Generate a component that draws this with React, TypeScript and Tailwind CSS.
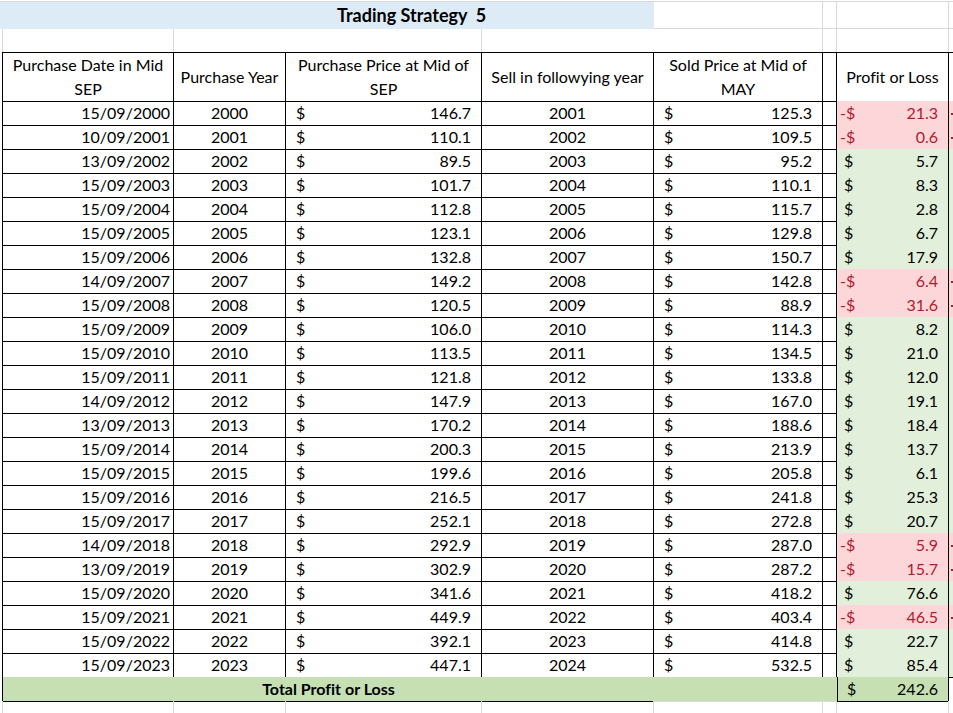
import React from 'react';

type Trade = {
  date: string;
  buyYear: number;
  buyPrice: string;
  sellYear: number;
  sellPrice: string;
  pl: number;
};

const trades: Trade[] = [
  { date: '15/09/2000', buyYear: 2000, buyPrice: '146.7', sellYear: 2001, sellPrice: '125.3', pl: -21.3 },
  { date: '10/09/2001', buyYear: 2001, buyPrice: '110.1', sellYear: 2002, sellPrice: '109.5', pl: -0.6 },
  { date: '13/09/2002', buyYear: 2002, buyPrice: '89.5', sellYear: 2003, sellPrice: '95.2', pl: 5.7 },
  { date: '15/09/2003', buyYear: 2003, buyPrice: '101.7', sellYear: 2004, sellPrice: '110.1', pl: 8.3 },
  { date: '15/09/2004', buyYear: 2004, buyPrice: '112.8', sellYear: 2005, sellPrice: '115.7', pl: 2.8 },
  { date: '15/09/2005', buyYear: 2005, buyPrice: '123.1', sellYear: 2006, sellPrice: '129.8', pl: 6.7 },
  { date: '15/09/2006', buyYear: 2006, buyPrice: '132.8', sellYear: 2007, sellPrice: '150.7', pl: 17.9 },
  { date: '14/09/2007', buyYear: 2007, buyPrice: '149.2', sellYear: 2008, sellPrice: '142.8', pl: -6.4 },
  { date: '15/09/2008', buyYear: 2008, buyPrice: '120.5', sellYear: 2009, sellPrice: '88.9', pl: -31.6 },
  { date: '15/09/2009', buyYear: 2009, buyPrice: '106.0', sellYear: 2010, sellPrice: '114.3', pl: 8.2 },
  { date: '15/09/2010', buyYear: 2010, buyPrice: '113.5', sellYear: 2011, sellPrice: '134.5', pl: 21.0 },
  { date: '15/09/2011', buyYear: 2011, buyPrice: '121.8', sellYear: 2012, sellPrice: '133.8', pl: 12.0 },
  { date: '14/09/2012', buyYear: 2012, buyPrice: '147.9', sellYear: 2013, sellPrice: '167.0', pl: 19.1 },
  { date: '13/09/2013', buyYear: 2013, buyPrice: '170.2', sellYear: 2014, sellPrice: '188.6', pl: 18.4 },
  { date: '15/09/2014', buyYear: 2014, buyPrice: '200.3', sellYear: 2015, sellPrice: '213.9', pl: 13.7 },
  { date: '15/09/2015', buyYear: 2015, buyPrice: '199.6', sellYear: 2016, sellPrice: '205.8', pl: 6.1 },
  { date: '15/09/2016', buyYear: 2016, buyPrice: '216.5', sellYear: 2017, sellPrice: '241.8', pl: 25.3 },
  { date: '15/09/2017', buyYear: 2017, buyPrice: '252.1', sellYear: 2018, sellPrice: '272.8', pl: 20.7 },
  { date: '14/09/2018', buyYear: 2018, buyPrice: '292.9', sellYear: 2019, sellPrice: '287.0', pl: -5.9 },
  { date: '13/09/2019', buyYear: 2019, buyPrice: '302.9', sellYear: 2020, sellPrice: '287.2', pl: -15.7 },
  { date: '15/09/2020', buyYear: 2020, buyPrice: '341.6', sellYear: 2021, sellPrice: '418.2', pl: 76.6 },
  { date: '15/09/2021', buyYear: 2021, buyPrice: '449.9', sellYear: 2022, sellPrice: '403.4', pl: -46.5 },
  { date: '15/09/2022', buyYear: 2022, buyPrice: '392.1', sellYear: 2023, sellPrice: '414.8', pl: 22.7 },
  { date: '15/09/2023', buyYear: 2023, buyPrice: '447.1', sellYear: 2024, sellPrice: '532.5', pl: 85.4 },
];

const GRID = 'grid grid-cols-[172px_112px_196px_172px_169px_14px_112px_1fr] ml-[2px]';

const Money: React.FC<{ value: string; className?: string }> = ({ value, className = '' }) => (
  <div className={`flex items-center justify-between pl-[10px] pr-[10px] ${className}`}>
    <span>$</span>
    <span>{value}</span>
  </div>
);

const TradeRow: React.FC<{ t: Trade }> = ({ t }) => {
  const loss = t.pl < 0;
  const fill = loss ? 'bg-[#fcd6d9] text-[#b01c2c]' : 'bg-[#e2efda]';
  return (
    <div className={`${GRID} h-6`}>
      <div className="border-l border-r border-b border-black flex items-center justify-end pr-[3px]">{t.date}</div>
      <div className="border-r border-b border-black flex items-center justify-center">{t.buyYear}</div>
      <Money value={t.buyPrice} className="border-r border-b border-black" />
      <div className="border-r border-b border-black flex items-center justify-center">{t.sellYear}</div>
      <Money value={t.sellPrice} className="border-r border-b border-black" />
      <div className="border-r border-b border-black" />
      <div className={`border-r border-b border-black flex items-center justify-between pl-[3px] pr-[10px] ${fill}`}>
        <span className="whitespace-pre">{loss ? '-$' : ' $'}</span>
        <span>{Math.abs(t.pl).toFixed(1)}</span>
      </div>
      {/* next sheet column, only its edge is on screen */}
      <div className={`border-b border-black flex items-center pl-[2px] ${fill}`}>
        {loss && <div className="w-[5px] h-[2px] bg-[#b01c2c] mt-[2px]" />}
      </div>
    </div>
  );
};

export default function App() {
  const total = trades.reduce((s, t) => s + t.pl, 0);

  return (
    <div className="w-[953px] h-[713px] overflow-hidden bg-white text-black text-[16px] font-['Lato',sans-serif] [font-variant-ligatures:none]">
      {/* sheet row above the title */}
      <div className="h-[2px] border-b border-[#d9d9d9]" />

      {/* title */}
      <div className="grid grid-cols-[654px_169px_14px_112px_1fr] h-[27px] border-b border-[#d9d9d9]">
        <div className="bg-[#ddebf7] flex items-center pl-[337px] font-bold text-[18px] whitespace-pre">Trading Strategy  5</div>
        <div className="border-r border-[#d9d9d9]" />
        <div className="border-r border-[#d9d9d9]" />
        <div className="border-r border-[#d9d9d9]" />
        <div />
      </div>

      {/* empty spacer row */}
      <div className="grid grid-cols-[172px_308px_341px_14px_112px_1fr] ml-[2px] h-[23px]">
        <div className="border-l border-r border-[#d9d9d9]" />
        <div className="border-r border-[#d9d9d9]" />
        <div className="border-r border-[#d9d9d9]" />
        <div className="border-r border-[#d9d9d9]" />
        <div className="border-r border-[#d9d9d9]" />
        <div />
      </div>

      {/* header */}
      <div className={`${GRID} h-[49px] leading-6 text-center`}>
        <div className="border border-black flex items-center justify-center">Purchase Date in Mid<br />SEP</div>
        <div className="border-t border-r border-b border-black flex items-center justify-center">Purchase Year</div>
        <div className="border-t border-r border-b border-black flex items-center justify-center">Purchase Price at Mid of<br />SEP</div>
        <div className="border-t border-r border-b border-black flex items-center justify-center">Sell in followying year</div>
        <div className="border-t border-r border-b border-black flex items-center justify-center">Sold Price at Mid of<br />MAY</div>
        <div className="border-t border-r border-b border-black" />
        <div className="border-t border-r border-b border-black flex items-center justify-center">Profit or Loss</div>
        <div className="border-t border-b border-black" />
      </div>

      {trades.map(t => (
        <TradeRow key={t.buyYear} t={t} />
      ))}

      {/* total */}
      <div className={`${GRID} h-6`}>
        <div className="col-span-4 bg-[#c6e0b4] border-l border-b border-black flex items-center justify-center font-bold">Total Profit or Loss</div>
        <div className="col-span-2 bg-[#c6e0b4] border-b border-[#d9d9d9]" />
        <div className="border-l border-r border-b border-black bg-[#c6e0b4] flex items-center justify-between pl-[9px] pr-[10px]">
          <span>$</span>
          <span>{total.toFixed(1)}</span>
        </div>
        <div />
      </div>

      {/* sheet rows below */}
      <div className={`${GRID} h-[13px]`}>
        <div className="border-l border-r border-[#d9d9d9]" />
        <div className="border-r border-[#d9d9d9]" />
        <div className="border-r border-[#d9d9d9]" />
        <div className="border-r border-[#d9d9d9]" />
        <div className="border-r border-[#d9d9d9]" />
        <div className="border-r border-[#d9d9d9]" />
        <div className="border-r border-[#d9d9d9]" />
        <div />
      </div>
    </div>
  );
}
